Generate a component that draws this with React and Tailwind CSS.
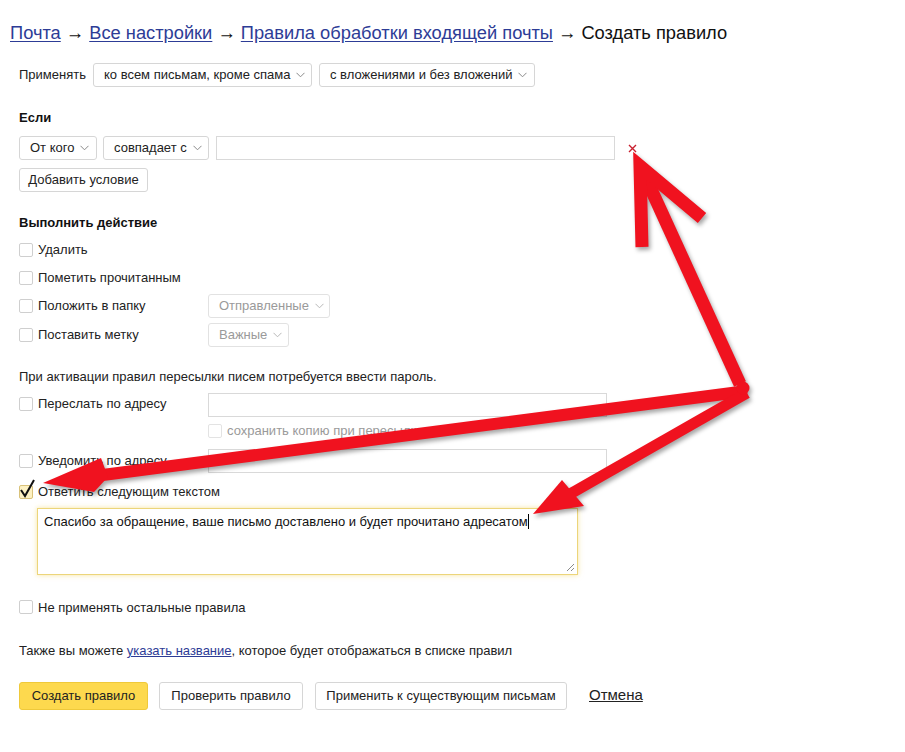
import React from 'react';

const font = { fontFamily: '"Liberation Sans", Arial, sans-serif' };

const Chevron = ({ color = "#8a8a8a" }) => (
    <svg width="9" height="6" viewBox="0 0 9 6" className="ml-1.5 shrink-0">
        <polyline points="0.5,0.8 4.5,4.8 8.5,0.8" fill="none" stroke={color} strokeWidth="1" />
    </svg>
);

const Select = ({ label, className = "", disabled = false }) => (
    <div className={`h-[24px] px-[10px] flex items-center justify-between whitespace-nowrap border border-[#d6d6d6] rounded-[3px] bg-white text-[13px] ${disabled ? 'text-[#9a9a9a] border-[#e2e2e2]' : 'text-[#222]'} ${className}`}>
        {label}
        <Chevron color={disabled ? "#b8b8b8" : "#8a8a8a"} />
    </div>
);

const Box = ({ checked = false, light = false }) => (
    checked ? (
        <span className="relative w-[14px] h-[14px] shrink-0 rounded-[2px] border border-[#d9c27a] bg-[#fdf1c2]">
            <svg width="18" height="20" viewBox="0 0 18 20" className="absolute left-[-1px] top-[-8px] overflow-visible">
                <polyline points="2,12 6,18 15,2" fill="none" stroke="#111" strokeWidth="2" />
            </svg>
        </span>
    ) : (
        <span className={`w-[14px] h-[14px] shrink-0 rounded-[2px] border ${light ? 'border-[#e3e3e3]' : 'border-[#cfcfcf]'} bg-white`} />
    )
);

const Check = ({ label, checked, light }) => (
    <div className={`flex items-center gap-[5px] whitespace-nowrap text-[13px] ${light ? 'text-[#9a9a9a]' : 'text-[#222]'}`}>
        <Box checked={checked} light={light} />
        <span>{label}</span>
    </div>
);

const Input = ({ className = "" }) => (
    <div className={`h-[24px] border border-[#d9d9d9] bg-white ${className}`} />
);

// red annotation arrows drawn over the form
const Arrows = () => (
    <svg width="905" height="752" className="absolute left-0 top-0 pointer-events-none" style={{ filter: 'drop-shadow(2px 3px 2px rgba(0,0,0,0.35))' }}>
        <g stroke="#f0121f" strokeWidth="13" fill="none" strokeLinecap="butt">
            <line x1="740" y1="384" x2="645" y2="176" />
            <polyline points="642,247 640,166 702,218" strokeLinejoin="miter" strokeMiterlimit="10" />
            <line x1="747" y1="391" x2="95" y2="476" strokeWidth="12" />
            <line x1="747" y1="393" x2="570" y2="494" strokeWidth="11" />
        </g>
        <polygon points="43,483 101,458 108,477 94,492" fill="#f0121f" />
        <polygon points="533,514 562,480 584,506" fill="#f0121f" />
        <circle cx="743" cy="388" r="6.5" fill="#f0121f" />
    </svg>
);

export default function App() {
    return (
        <div className="relative w-[905px] h-[752px] bg-white overflow-hidden" style={font}>
            <div className="pl-[19px] pt-[22px]">
                <div className="-ml-[9px] text-[18.3px] leading-[22px] text-[#111] whitespace-nowrap">
                    <a className="text-[#2d3c96] underline underline-offset-2">Почта</a>
                    <span> → </span>
                    <a className="text-[#2d3c96] underline underline-offset-2">Все настройки</a>
                    <span> → </span>
                    <a className="text-[#2d3c96] underline underline-offset-2">Правила обработки входящей почты</a>
                    <span> → Создать правило</span>
                </div>

                <div className="mt-[19px] flex items-center text-[13px] text-[#222]">
                    <span className="mr-[7px]">Применять</span>
                    <Select label="ко всем письмам, кроме спама" className="w-[219px]" />
                    <Select label="с вложениями и без вложений" className="ml-[7px] w-[216px]" />
                </div>

                <div className="mt-[23px] text-[13px] leading-[16px] font-bold text-[#111]">Если</div>
                <div className="mt-[10px] flex items-center">
                    <Select label="От кого" className="w-[78px]" />
                    <Select label="совпадает с" className="ml-[6px] w-[106px]" />
                    <Input className="ml-[7px] w-[399px]" />
                    <svg width="9" height="9" viewBox="0 0 9 9" className="ml-[13px]">
                        <path d="M1 1 L8 8 M8 1 L1 8" stroke="#c8202f" strokeWidth="1.4" />
                    </svg>
                </div>
                <button className="mt-[8px] h-[24px] w-[129px] border border-[#d6d6d6] rounded-[3px] bg-white text-[13px] text-[#222]">Добавить условие</button>

                <div className="mt-[23px] text-[13px] leading-[16px] font-bold text-[#111]">Выполнить действие</div>
                <div className="mt-[5px] grid grid-cols-[189px_1fr]">
                    <div className="h-[28px] flex items-center"><Check label="Удалить" /></div>
                    <div />
                    <div className="h-[28px] flex items-center"><Check label="Пометить прочитанным" /></div>
                    <div />
                    <div className="h-[28px] flex items-center"><Check label="Положить в папку" /></div>
                    <div className="h-[28px] flex items-center"><Select label="Отправленные" disabled className="w-[122px]" /></div>
                    <div className="h-[29px] flex items-center"><Check label="Поставить метку" /></div>
                    <div className="h-[29px] flex items-center"><Select label="Важные" disabled className="w-[81px]" /></div>
                </div>

                <div className="mt-[20px] text-[13px] leading-[16px] text-[#222]">При активации правил пересылки писем потребуется ввести пароль.</div>
                <div className="mt-[8px] grid grid-cols-[189px_399px]">
                    <div className="h-[24px] flex items-center -mt-[1px]"><Check label="Переслать по адресу" /></div>
                    <Input />
                    <div />
                    <div className="h-[26px] flex items-center pt-[1px]"><Check label="сохранить копию при пересылке" light /></div>
                    <div className="mt-[6px] h-[24px] flex items-center"><Check label="Уведомить по адресу" /></div>
                    <Input className="mt-[6px]" />
                </div>
                <div className="mt-[9px]"><Check label="Ответить следующим текстом" checked /></div>

                <div className="mt-[6px] ml-[18px] w-[541px] h-[67px] relative border border-[#ecd57a] shadow-[0_0_5px_rgba(240,205,80,0.55)] bg-white px-[6px] py-[3px] text-[13px] text-[#111]">
                    Спасибо за обращение, ваше письмо доставлено и будет прочитано адресатом<span className="inline-block w-px h-[15px] bg-black align-[-3px]" />
                    <svg width="9" height="9" viewBox="0 0 9 9" className="absolute right-[2px] bottom-[2px]">
                        <path d="M8 1 L1 8 M8 5 L5 8" stroke="#8a8a8a" strokeWidth="1" />
                    </svg>
                </div>

                <div className="mt-[23px]"><Check label="Не применять остальные правила" /></div>

                <div className="mt-[24px] text-[13px] text-[#222]">
                    Также вы можете <a className="text-[#2d3c96] underline">указать название</a>, которое будет отображаться в списке правил
                </div>

                <div className="mt-[21px] flex items-center text-[13px] text-[#222]">
                    <button className="h-[28px] w-[129px] rounded-[3px] bg-[#fdd94e] border border-[#efc93a]">Создать правило</button>
                    <button className="ml-[11px] h-[28px] w-[144px] rounded-[3px] bg-white border border-[#d6d6d6]">Проверить правило</button>
                    <button className="ml-[12px] h-[28px] w-[252px] rounded-[3px] bg-white border border-[#d6d6d6]">Применить к существующим письмам</button>
                    <a className="ml-[22px] text-[15px] text-[#222] underline">Отмена</a>
                </div>
            </div>
            <Arrows />
        </div>
    );
}
